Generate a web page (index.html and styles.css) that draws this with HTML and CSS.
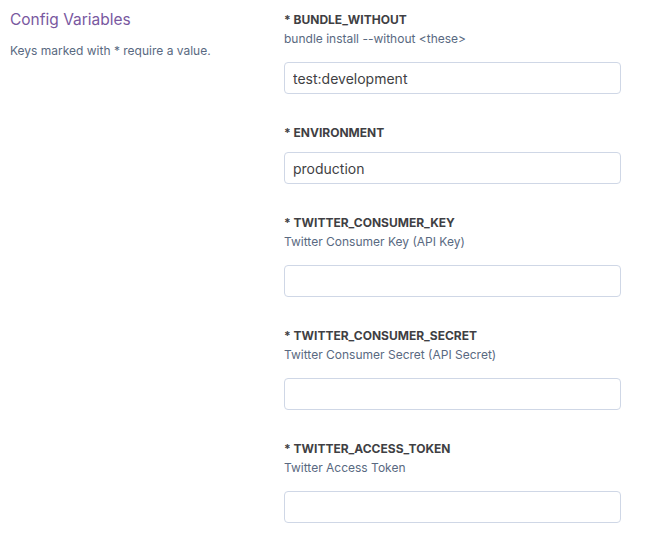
FILE: index.html
```html
<!DOCTYPE html>
<html>
<head>
<meta charset="utf-8">
<link rel="stylesheet" href="styles.css">
</head>
<body>
<div class="page">
  <div class="intro">
    <h2 class="title">Config Variables</h2>
    <p class="note">Keys marked with * require a value.</p>
  </div>
  <div class="fields">
    <div class="field">
      <div class="label">* BUNDLE_WITHOUT</div>
      <div class="desc">bundle install --without &lt;these&gt;</div>
      <input class="input" type="text" value="test:development">
    </div>
    <div class="field">
      <div class="label">* ENVIRONMENT</div>
      <input class="input" type="text" value="production">
    </div>
    <div class="field">
      <div class="label">* TWITTER_CONSUMER_KEY</div>
      <div class="desc">Twitter Consumer Key (API Key)</div>
      <input class="input" type="text" value="">
    </div>
    <div class="field">
      <div class="label">* TWITTER_CONSUMER_SECRET</div>
      <div class="desc">Twitter Consumer Secret (API Secret)</div>
      <input class="input" type="text" value="">
    </div>
    <div class="field">
      <div class="label">* TWITTER_ACCESS_TOKEN</div>
      <div class="desc">Twitter Access Token</div>
      <input class="input" type="text" value="">
    </div>
  </div>
</div>
</body>
</html>
```

FILE: styles.css
```css
html, body {
  margin: 0;
  padding: 0;
  background: #ffffff;
}
body {
  font-family: Inter, "Liberation Sans", Arial, sans-serif;
  color: #3f3f44;
}
.page {
  display: flex;
  padding: 0 0 0 10px;
}
.intro {
  width: 274px;
  flex: none;
  padding-top: 10px;
}
.title {
  margin: 0;
  font-size: 15.5px;
  line-height: 20px;
  font-weight: normal;
  color: #79589f;
}
.note {
  margin: 13px 0 0;
  font-size: 12px;
  line-height: 16px;
  color: #596981;
}
.fields {
  display: flex;
  flex-direction: column;
  gap: 31px;
  width: 337px;
  padding-top: 12px;
}
.field {
  display: flex;
  flex-direction: column;
}
.label {
  font-size: 12px;
  line-height: 16px;
  font-weight: bold;
  color: #3f3f44;
}
.desc {
  margin: 3px 0 4px;
  font-size: 12px;
  line-height: 16px;
  color: #596981;
}
.input {
  margin-top: 11px;
  box-sizing: border-box;
  width: 337px;
  height: 32px;
  padding: 0 8px;
  border: 1px solid #cfd7e6;
  border-radius: 4px;
  font-family: Inter, "Liberation Sans", Arial, sans-serif;
  font-size: 14px;
  color: #3f3f44;
  background: #fff;
  outline: none;
}
```
